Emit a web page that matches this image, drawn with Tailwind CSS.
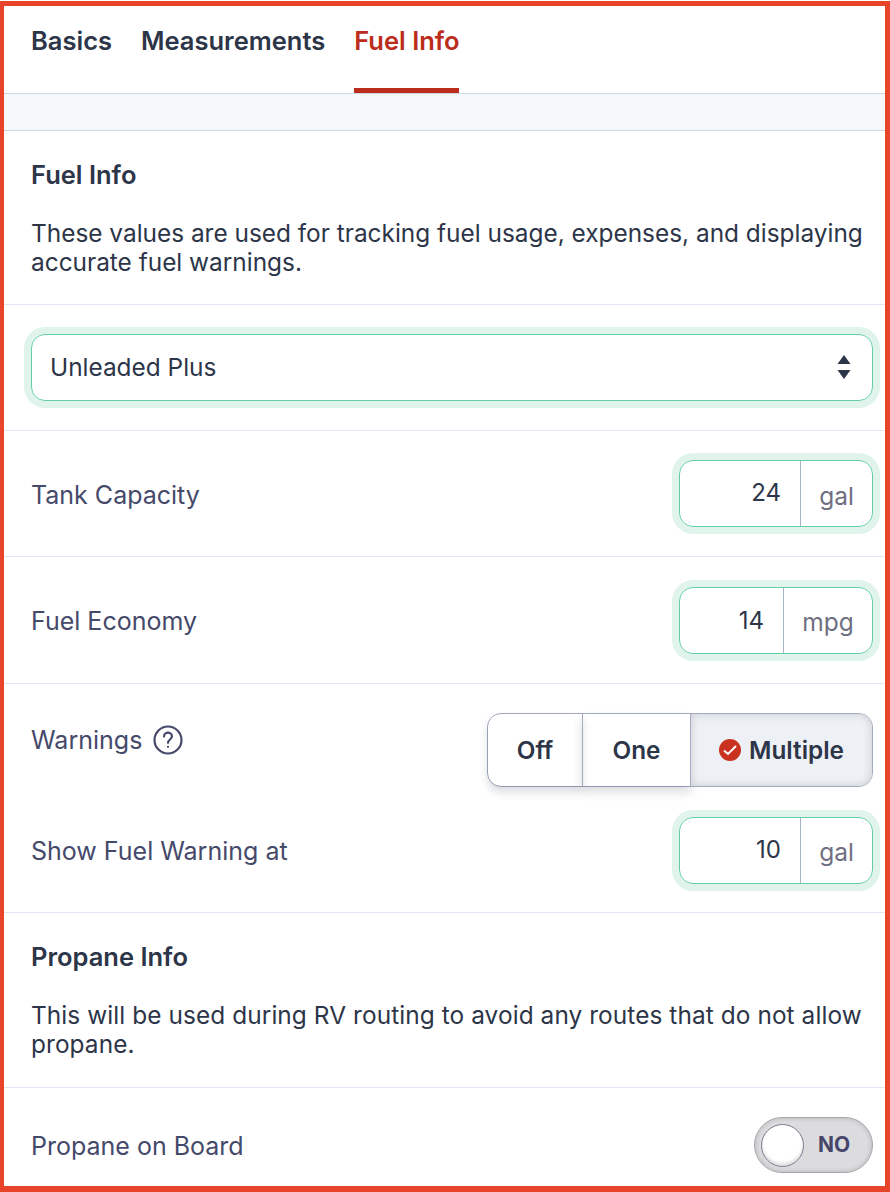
<!DOCTYPE html>
<html lang="en">
<head>
<meta charset="UTF-8">
<script src="https://cdn.jsdelivr.net/npm/@tailwindcss/browser@4"></script>
<title>Fuel Info</title>
</head>
<body class="bg-white">
<div class="w-[890px] h-[1192px] overflow-hidden pt-px font-['Inter',sans-serif] text-[24px] text-[#2d3548]">
  <div class="h-[1191px] border-[#e8442a] border-t-[5px] border-l-[4px] border-r-[5px] border-b-[6px] overflow-hidden">
    <!-- tabs -->
    <nav class="h-[88px] border-b border-[#cdd5e4] flex gap-[29px] pl-[27px] font-semibold text-[25.500px]">
      <a class="pt-[16px] leading-[38px]">Basics</a>
      <a class="pt-[16px] leading-[38px]">Measurements</a>
      <a class="pt-[16px] leading-[38px] w-[105px] whitespace-nowrap text-[#bb2c1b] border-b-[5px] border-[#bb2c1b] h-[87px]">Fuel Info</a>
    </nav>
    <div class="h-[37px] bg-[#f7f8fc] border-b border-[#cdd5e4]"></div>

    <!-- fuel info -->
    <section class="h-[174px] border-b border-[#e0e7f2] pl-[27px] pr-[12px] pt-[26px]">
      <h2 class="font-semibold leading-[36px] text-[25.500px]">Fuel Info</h2>
      <p class="mt-[26px] leading-[29px] text-[24.400px]">These values are used for tracking fuel usage, expenses, and displaying accurate fuel warnings.</p>
    </section>

    <!-- fuel type -->
    <section class="h-[126px] border-b border-[#e0e7f2] pl-[27px] pr-[12px] flex items-center">
      <div class="w-full h-[67px] rounded-[14px] border border-[#63cfa6] shadow-[0_0_0_7px_#e1f4ec] flex items-center justify-between pl-[18px] pr-[21px] -mt-[1px]">
        <span class="text-[24.400px]">Unleaded Plus</span>
        <svg width="14" height="24" viewBox="0 0 14 24" fill="#2d3548"><path d="M7 0l6.500 9H.5z"/><path d="M.5 15h13L7 24z"/></svg>
      </div>
    </section>

    <!-- tank -->
    <section class="h-[126px] border-b border-[#e0e7f2] pl-[27px] pr-[12px] flex items-center justify-between">
      <span class="text-[#45496a] text-[25px] pt-[5px]">Tank Capacity</span>
      <div class="w-[194px] h-[67px] rounded-[14px] border border-[#63cfa6] shadow-[0_0_0_7px_#e1f4ec] flex">
        <span class="flex-1 flex items-center justify-end pr-[19px] pb-[2px]">24</span>
        <span class="w-[72px] border-l border-[#a9b3c7] flex items-center justify-center text-[#6e7082] text-[24.500px] pt-[5px]">gal</span>
      </div>
    </section>

    <!-- economy -->
    <section class="h-[127px] border-b border-[#e0e7f2] pl-[27px] pr-[12px] flex items-center justify-between">
      <span class="text-[#45496a] text-[25px] pt-[3px]">Fuel Economy</span>
      <div class="w-[194px] h-[67px] rounded-[14px] border border-[#63cfa6] shadow-[0_0_0_7px_#e1f4ec] flex">
        <span class="flex-1 flex items-center justify-end pr-[19px] pt-[1px]">14</span>
        <span class="w-[89px] border-l border-[#a9b3c7] flex items-center justify-center text-[#6e7082] text-[24.500px] pt-[5px]">mpg</span>
      </div>
    </section>

    <!-- warnings -->
    <section class="h-[229px] border-b border-[#e0e7f2] pl-[27px] pr-[12px] pt-[29px]">
      <div class="flex justify-between items-start">
        <span class="flex items-center gap-[11px] text-[#45496a] text-[25px] leading-[54px]">Warnings
          <svg width="30" height="30" viewBox="0 0 30 30" fill="none" stroke="#45496a" stroke-width="2.200"><circle cx="15" cy="15" r="13.500"/><path d="M11 11.500c0-2.300 1.800-3.800 4-3.800s4 1.500 4 3.600c0 3.200-4 3.200-4 6.500" stroke-linecap="round"/><circle cx="15" cy="21.800" r="1.100" fill="#45496a" stroke="none"/></svg>
        </span>
        <div class="flex h-[74px] font-semibold text-[24.300px] rounded-[14px] border border-[#a3abc2]">
          <span class="w-[94px] flex items-center justify-center rounded-l-[13px] shadow-[0_6px_10px_rgba(45,53,72,0.18)]">Off</span>
          <span class="w-[109px] flex items-center justify-center border-x border-[#a3abc2] shadow-[0_6px_10px_rgba(45,53,72,0.18)]">One</span>
          <span class="w-[181px] flex items-center justify-center gap-[8px] bg-[#edf0f4] rounded-r-[13px] shadow-[inset_0_0_8px_rgba(45,53,72,0.2)]">
            <svg width="22" height="22" viewBox="0 0 22 22"><circle cx="11" cy="11" r="11" fill="#c9321f"/><path d="M5 11.500l4 3.500 8-8" fill="none" stroke="#fff" stroke-width="2"/></svg>
            Multiple
          </span>
        </div>
      </div>
      <div class="flex justify-between items-center mt-[30px]">
        <span class="text-[#45496a] text-[25px] pt-[2px]">Show Fuel Warning at</span>
        <div class="w-[194px] h-[67px] rounded-[14px] border border-[#63cfa6] shadow-[0_0_0_7px_#e1f4ec] flex">
          <span class="flex-1 flex items-center justify-end pr-[19px] pb-[2px]">10</span>
          <span class="w-[72px] border-l border-[#a9b3c7] flex items-center justify-center text-[#6e7082] text-[24.500px] pt-[3px]">gal</span>
        </div>
      </div>
    </section>

    <!-- propane -->
    <section class="h-[175px] border-b border-[#e0e7f2] pl-[27px] pr-[12px] pt-[26px]">
      <h2 class="font-semibold leading-[36px] text-[25.500px]">Propane Info</h2>
      <p class="mt-[26px] leading-[29px] text-[24.400px] tracking-[0.085px]">This will be used during RV routing to avoid any routes that do not allow propane.</p>
    </section>

    <section class="h-[115px] pl-[27px] pr-[12px] flex items-center justify-between">
      <span class="text-[#45496a] text-[25px] pt-[2px]">Propane on Board</span>
      <div class="w-[119px] h-[56px] -mt-[1px] rounded-full bg-[#dcdcdf] border border-[#a6a6ab] shadow-[inset_0_0_5px_rgba(0,0,0,0.18)] flex items-center pl-[6px]">
        <span class="w-[43px] h-[43px] rounded-full bg-white border border-[#7b7b92] shadow-[inset_0_-3px_3px_rgba(0,0,0,0.12)]"></span>
        <span class="ml-[14px] text-[21px] font-bold text-[#45466a]">NO</span>
      </div>
    </section>
  </div>
</div>
</body>
</html>
